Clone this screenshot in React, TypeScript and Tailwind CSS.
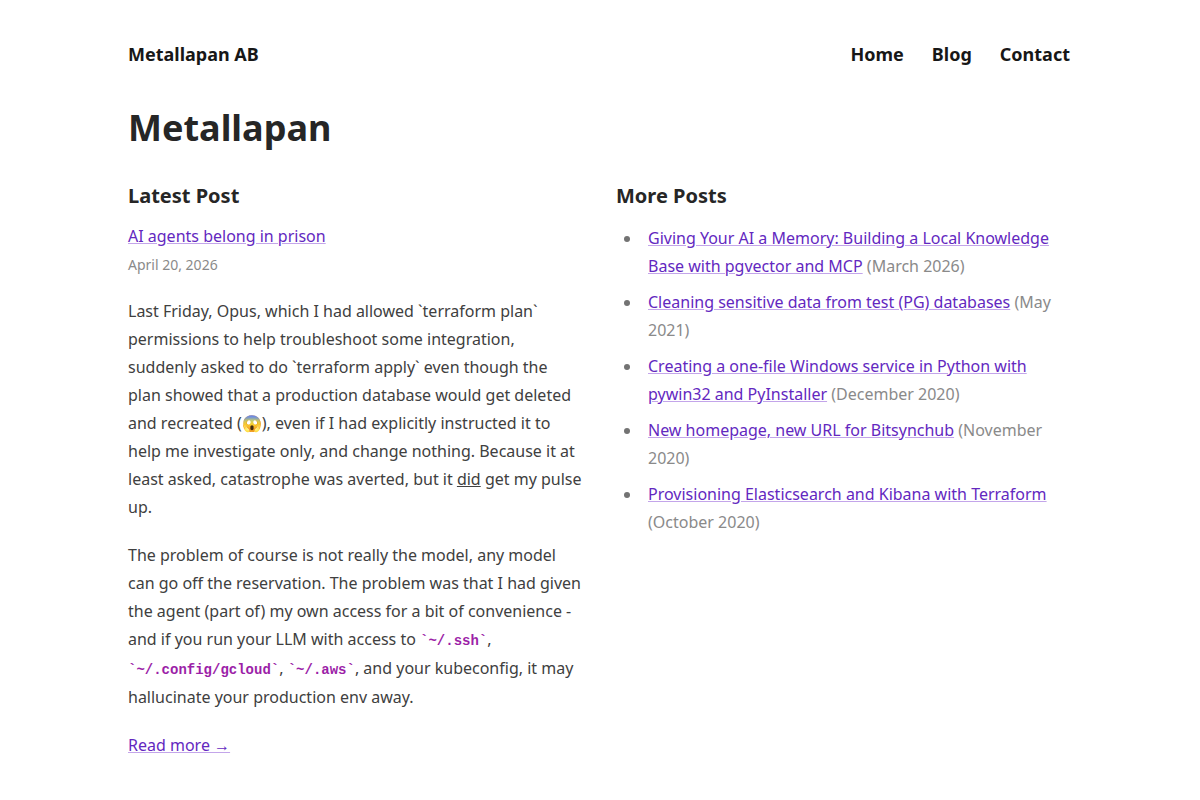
import type { ReactNode } from "react";

const posts = [
  { title: "Giving Your AI a Memory: Building a Local Knowledge Base with pgvector and MCP", date: "March 2026" },
  { title: "Cleaning sensitive data from test (PG) databases", date: "May 2021" },
  { title: "Creating a one-file Windows service in Python with pywin32 and PyInstaller", date: "December 2020" },
  { title: "New homepage, new URL for Bitsynchub", date: "November 2020" },
  { title: "Provisioning Elasticsearch and Kibana with Terraform", date: "October 2020" },
];

const navItems = ["Home", "Blog", "Contact"];

function PostLink({ children }: { children: ReactNode }) {
  return (
    <a href="#" className="text-[#6328bf] underline decoration-[#c3a5ea]">
      {children}
    </a>
  );
}

function Code({ children }: { children: ReactNode }) {
  return (
    <code className="font-['Liberation_Mono',monospace] text-sm leading-[25px] font-semibold text-[#9c1fa8]">
      {`\`${children}\``}
    </code>
  );
}

export default function App() {
  return (
    <div className="mx-auto max-w-[976px] bg-white px-4 pt-10 font-['Noto_Sans',sans-serif] text-base leading-7 text-[#404040]">
      <header className="flex items-center justify-between pr-0.5 text-lg leading-7 font-bold text-[#171717]">
        <a href="#">Metallapan AB</a>
        <nav className="flex gap-7">
          {navItems.map((item) => (
            <a key={item} href="#">
              {item}
            </a>
          ))}
        </nav>
      </header>
      <main>
        <h1 className="mt-10 text-4xl leading-10 font-bold text-[#262626]">Metallapan</h1>
        <div className="mt-8 grid grid-cols-2 gap-8">
          <section>
            <h2 className="text-xl leading-8 font-bold text-[#262626]">Latest Post</h2>
            <div className="mt-2.5">
              <PostLink>AI agents belong in prison</PostLink>
            </div>
            <p className="mt-px text-sm leading-7 text-[#8a8a8a]">April 20, 2026</p>
            <p className="mt-[18px]">
              Last Friday, Opus, which I had allowed `terraform plan` permissions to help troubleshoot some
              integration, suddenly asked to do `terraform apply` even though the plan showed that a production
              database would get deleted and recreated (😱), even if I had explicitly instructed it to help me
              investigate only, and change nothing. Because it at least asked, catastrophe was averted, but it{" "}
              <u>did</u> get my pulse up.
            </p>
            <p className="mt-5">
              The problem of course is not really the model, any model can go off the reservation. The problem was
              that I had given the agent (part of) my own access for a bit of convenience - and if you run your LLM
              with access to <Code>~/.ssh</Code>, <Code>~/.config/gcloud</Code>, <Code>~/.aws</Code>, and your
              kubeconfig, it may hallucinate your production env away.
            </p>
            <p className="mt-5">
              <PostLink>Read more →</PostLink>
            </p>
          </section>
          <section>
            <h2 className="text-xl leading-8 font-bold text-[#262626]">More Posts</h2>
            <ul className="mt-3 list-disc space-y-2 pl-[26px] marker:text-[#737373]">
              {posts.map((post) => (
                <li key={post.title} className="pl-1.5">
                  <PostLink>{post.title}</PostLink> <span className="text-[#8a8a8a]">({post.date})</span>
                </li>
              ))}
            </ul>
          </section>
        </div>
      </main>
    </div>
  );
}
